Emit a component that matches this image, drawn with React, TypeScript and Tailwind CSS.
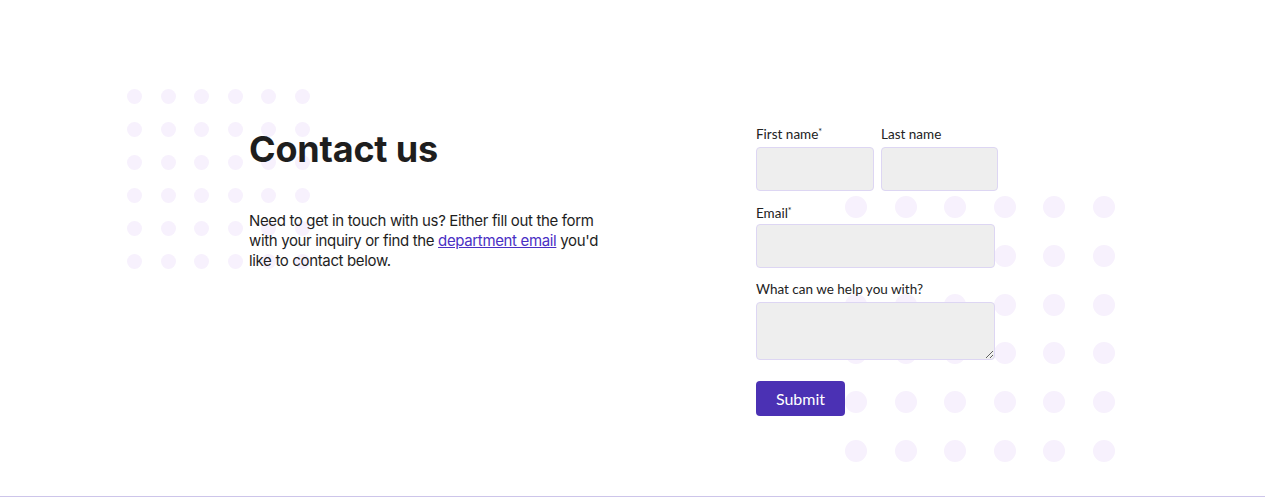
import React from "react";

const Dots: React.FC<{ className: string; dot: string }> = ({ className, dot }) => (
  <div className={className} aria-hidden>
    {Array.from({ length: 36 }).map((_, i) => (
      <span key={i} className={`${dot} rounded-full bg-[#f7f1fd]`} />
    ))}
  </div>
);

const App: React.FC = () => {
  const labelCls = "block text-[13.5px] leading-5 text-[#222]";
  const fieldCls =
    "block h-[44px] rounded-[4px] border border-[#ddd6f3] bg-[#eeeeee] outline-none";

  return (
    <div className="relative h-[497px] w-[1265px] overflow-hidden bg-white">
      {/* decorative dot grids */}
      <Dots
        className="absolute left-[127px] top-[89px] grid grid-cols-[repeat(6,15px)] grid-rows-[repeat(6,15px)] gap-x-[18.5px] gap-y-[18px]"
        dot="h-[15px] w-[15px]"
      />
      <Dots
        className="absolute left-[845px] top-[196px] grid grid-cols-[repeat(6,22px)] grid-rows-[repeat(6,22px)] gap-x-[27.5px] gap-y-[26.8px]"
        dot="h-[22px] w-[22px]"
      />

      <div className="relative z-10 flex pl-[249px] pt-[129px]">
        <div className="w-[507px] font-['Inter',sans-serif]">
          <h1 className="text-[36px] font-bold leading-10 tracking-[-0.2px] text-[#1e1e1e]">
            Contact us
          </h1>
          <p className="mt-[42px] w-[360px] text-[15px] leading-5 tracking-[-0.35px] text-[#1e1e1e]">
            Need to get in touch with us? Either fill out the form with your
            inquiry or find the{" "}
            <a href="#" className="text-[#4a2fc4] underline">
              department email
            </a>{" "}
            you'd like to contact below.
          </p>
        </div>

        <form
          className="-mt-[5px] w-[242px] font-['Lato',sans-serif]"
          onSubmit={(e) => e.preventDefault()}
        >
          <div className="flex gap-[7px]">
            <div>
              <label className={labelCls}>
                First name<sup className="text-[9px]">*</sup>
              </label>
              <input className={`${fieldCls} mt-[3px] w-[118px]`} />
            </div>
            <div>
              <label className={labelCls}>Last name</label>
              <input className={`${fieldCls} mt-[3px] w-[117px]`} />
            </div>
          </div>

          <label className={`${labelCls} mt-[12px]`}>
            Email<sup className="text-[9px]">*</sup>
          </label>
          <input className={`${fieldCls} mt-[1px] w-[239px]`} />

          <label className={`${labelCls} mt-[11px]`}>What can we help you with?</label>
          <textarea className="mt-[3px] block h-[58px] w-[239px] rounded-[4px] border border-[#ddd6f3] bg-[#eeeeee] outline-none" />

          <button
            type="submit"
            className="mt-[21px] h-[35px] w-[89px] rounded-[4px] bg-[#4b31b4] text-[16px] font-normal text-white"
          >
            Submit
          </button>
        </form>
      </div>

      <div className="absolute bottom-0 left-0 h-px w-[1265px] bg-[#cdc5ea]" />
    </div>
  );
};

export default App;
